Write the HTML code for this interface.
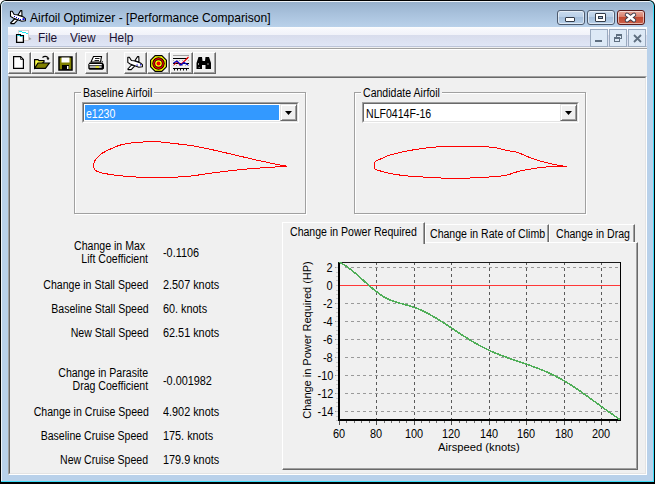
<!DOCTYPE html>
<html><head><meta charset="utf-8"><title>Airfoil Optimizer</title>
<style>
*{margin:0;padding:0;box-sizing:border-box}
html,body{width:655px;height:484px;overflow:hidden;background:#fff;font-family:"Liberation Sans",sans-serif}
.a{position:absolute}
.t{position:absolute;white-space:nowrap;font-size:12px;color:#000;line-height:13px;transform:scaleX(.88);transform-origin:0 0}
.r{text-align:right;transform-origin:100% 0}
.c{transform:scaleX(.93);transform-origin:0 0}
.cr{text-align:right;transform:scaleX(.91);transform-origin:100% 0}
.cc{text-align:center;transform:scaleX(.91);transform-origin:50% 0}
.btn{position:absolute;width:23px;height:22px;background:#f0f0f0;border-left:1px solid #fff;border-top:1px solid #fff;border-right:1px solid #696969;border-bottom:1px solid #696969;box-shadow:inset -1px -1px 0 #a0a0a0}
.btn svg{position:absolute;left:2px;top:2px}
</style></head><body>

<div class="a" style="left:0;top:0;width:655px;height:484px;background:#000;border-radius:6px 6px 0 0"></div>
<div class="a" style="left:1px;top:1px;width:653px;height:481px;border-radius:5px 5px 0 0;background:#3ddcf8"></div>
<div class="a" style="left:1px;top:1px;width:652px;height:480px;border-radius:5px 5px 0 0;background:#eef3f8"></div>
<div class="a" style="left:2px;top:2px;width:651px;height:479px;border-radius:4px 4px 0 0;background:linear-gradient(#98b1cc 0px,#a6bfda 10px,#b9d1ea 25px,#b9d1ea 100%)"></div>
<svg class="a" style="left:8px;top:8px" width="20" height="18" viewBox="0 0 20 18">
<path d="M10 7 L12.6 2.6 L13.8 2.6 L14 8.5 Z" fill="#fff" stroke="#000" stroke-width="1.1" stroke-linejoin="round"/>
<path d="M2.6 15 L6.5 11 L9.8 11.8 L6.2 15.6 L3 15.6 Z" fill="#fff" stroke="#000" stroke-width="1.1" stroke-linejoin="round"/>
<path d="M2.5 3.2 L4.2 3.2 L6.2 6.5 L9 6.8 L15.5 9 L17.4 10.6 L17.4 12.8 L13.8 13.2 L5.2 10 L2.5 8.4 Z" fill="#fff" stroke="#000" stroke-width="1.1" stroke-linejoin="round"/>
<rect x="6" y="8" width="1" height="1" fill="#0000d0"/><rect x="8" y="9" width="1" height="1" fill="#0000d0"/><rect x="10" y="10" width="1" height="1" fill="#0000d0"/><rect x="12" y="11" width="1" height="1" fill="#0000d0"/>
<rect x="14.5" y="10.2" width="2" height="1.8" fill="#0000e0"/>
</svg>
<div class="t" style="left:30px;top:12px;font-size:12.1px;line-height:13px;color:#000;transform:none">Airfoil Optimizer - [Performance Comparison]</div>
<div class="a" style="left:557px;top:10px;width:28px;height:15px;border:1px solid #4d5a6e;border-radius:3px;background:linear-gradient(#c8daee 0%,#bad0e8 45%,#a5bfdc 50%,#b7cfe8 100%);box-shadow:inset 0 0 0 1px rgba(255,255,255,.55)"></div>
<div class="a" style="left:587px;top:10px;width:28px;height:15px;border:1px solid #4d5a6e;border-radius:3px;background:linear-gradient(#c8daee 0%,#bad0e8 45%,#a5bfdc 50%,#b7cfe8 100%);box-shadow:inset 0 0 0 1px rgba(255,255,255,.55)"></div>
<div class="a" style="left:617px;top:10px;width:28px;height:15px;border:1px solid #5a1a1a;border-radius:3px;background:linear-gradient(#e8a99c 0%,#d7806d 45%,#c24a32 50%,#cc5f48 100%);box-shadow:inset 0 0 0 1px rgba(255,255,255,.55)"></div>
<div class="a" style="left:565px;top:17px;width:10px;height:5px;background:#fff;border:1px solid #333c4a;border-radius:1px"></div>
<div class="a" style="left:595px;top:13px;width:11px;height:9px;background:#fff;border:1px solid #333c4a;border-radius:1px"></div>
<div class="a" style="left:598px;top:16px;width:5px;height:3px;background:#9db6d2;border:1px solid #333c4a"></div>
<svg class="a" style="left:623px;top:11px" width="16" height="13" viewBox="0 0 16 13">
<path d="M4 3.8 L11 9.2 M11 3.8 L4 9.2" stroke="#3a3a4a" stroke-width="4.4" stroke-linecap="round"/>
<path d="M4 3.8 L11 9.2 M11 3.8 L4 9.2" stroke="#fff" stroke-width="2.6" stroke-linecap="round"/>
</svg>
<div class="a" style="left:8px;top:27px;width:639px;height:448px;background:#f0f0f0"></div>
<div class="a" style="left:8px;top:27px;width:639px;height:20px;background:linear-gradient(#fdfdfe 0px,#f7f8fc 2px,#f1f2f9 8px,#d8dcec 8px,#dfe5f5 18px,#e2e8f8 19px)"></div>
<div class="a" style="left:8px;top:46px;width:639px;height:1px;background:#bcc4d8"></div>
<svg class="a" style="left:12px;top:28px" width="22" height="18" viewBox="0 0 22 18">
<path d="M17 9 L19.5 11 L17 12 Z" fill="#9a9a9a"/>
<rect x="6.5" y="2.5" width="10" height="10" fill="#fff" stroke="#d8d0d0" stroke-width="1"/>
<path d="M7 3.5 L10 3.5 M10 4.5 L14 4.5 M14 5.5 L16 5.5" stroke="#20e8f0" stroke-width="1"/>
<path d="M4.6 6.6 L8.4 6.6 L8.4 7.6 L11.4 7.6 L11.4 14.4 L4.6 14.4 Z" fill="#fff" stroke="#000" stroke-width="1.3"/>
<path d="M5.2 7.5 L8 7.5 M8 8.5 L11 8.5" stroke="#20d8e8" stroke-width="1"/>
</svg>
<div class="t" style="left:37.5px;top:32px;color:#1a1030;transform:scaleX(.99)">File</div>
<div class="t" style="left:69.5px;top:32px;color:#1a1030;transform:scaleX(.99)">View</div>
<div class="t" style="left:108.5px;top:32px;color:#1a1030;transform:scaleX(.99)">Help</div>
<div class="a" style="left:590px;top:29px;width:18px;height:18px;border:1px solid #9aaabf;background:#dde9f6"></div>
<div class="a" style="left:609px;top:29px;width:18px;height:18px;border:1px solid #9aaabf;background:#dde9f6"></div>
<div class="a" style="left:628px;top:29px;width:18px;height:18px;border:1px solid #9aaabf;background:#dde9f6"></div>
<div class="a" style="left:595px;top:40px;width:7px;height:2px;background:#5f6f80"></div>
<div class="a" style="left:616px;top:34px;width:6px;height:5px;border:1px solid #5f6f80;border-top-width:2px"></div>
<div class="a" style="left:614px;top:37px;width:6px;height:5px;border:1px solid #5f6f80;border-top-width:2px;background:#dde9f6"></div>
<svg class="a" style="left:633px;top:34px" width="9" height="9" viewBox="0 0 9 9"><path d="M1 1 L8 8 M8 1 L1 8" stroke="#5f6f80" stroke-width="1.8"/></svg>
<div class="a" style="left:8px;top:48px;width:639px;height:1px;background:#a0a0a0"></div>
<div class="a" style="left:8px;top:49px;width:639px;height:1px;background:#fff"></div>
<div class="btn" style="left:8px;top:52px"><svg width="17" height="17" viewBox="0 0 17 17"><path d="M2.6 1.6 L9.6 1.6 L12.4 4.4 L12.4 13.4 L2.6 13.4 Z" fill="#fff" stroke="#000" stroke-width="1.2"/><path d="M9.6 1.6 L9.6 4.4 L12.4 4.4" fill="none" stroke="#000" stroke-width="0.8"/></svg></div>
<div class="btn" style="left:31px;top:52px"><svg width="17" height="17" viewBox="0 0 17 17"><path d="M0.6 4.6 L4 4.6 L5 5.6 L10 5.6 L10 7 L0.6 13.4 Z" fill="#ffff40" stroke="#000" stroke-width="1.2"/><path d="M0.6 13.4 L4 8 L15.4 8 L11.4 13.4 Z" fill="#808000" stroke="#000" stroke-width="1.2"/><path d="M8.5 2.5 Q11 0.2 14 2.5 L14 4" fill="none" stroke="#000" stroke-width="1.1"/><path d="M12.5 3.2 L14 5.2 L15.5 3.2 Z" fill="#000"/></svg></div>
<div class="btn" style="left:54px;top:52px"><svg width="17" height="17" viewBox="0 0 17 17"><rect x="2" y="2" width="13" height="13" fill="#808000" stroke="#000" stroke-width="1.5"/><rect x="4.5" y="2.5" width="8" height="5" fill="#fff"/><rect x="5" y="10" width="7" height="5" fill="#000"/><rect x="10" y="11" width="1.5" height="3" fill="#fff"/></svg></div>
<div class="btn" style="left:85px;top:52px"><svg width="17" height="17" viewBox="0 0 17 17"><path d="M5.5 1.5 L13.5 1.5 L12.5 7 L3 7 Z" fill="#fff" stroke="#000" stroke-width="1.1"/><path d="M7 3.5 L11.5 3.5 M6.5 5.5 L11 5.5" stroke="#000" stroke-width="0.9"/><path d="M1.5 7.5 L14.5 7.5 L16 9.5 L16 13.5 L14.5 14.8 L1.5 14.8 L0.3 13.5 L0.3 9.5 Z" fill="#000"/><rect x="1.3" y="9" width="12.5" height="1.3" fill="#fff"/><rect x="1.6" y="11.3" width="12" height="1.4" fill="#fff"/><rect x="7.5" y="11.3" width="3.5" height="1.4" fill="#e8e800"/><path d="M13.5 6 L15 7 M14 12 L15.5 11" stroke="#000" stroke-width="0.8"/></svg></div>
<div class="btn" style="left:124px;top:52px"><svg width="17" height="17" viewBox="0 0 17 17"><path d="M8 5.5 L10.6 1.6 L11.8 1.6 L12 7.5 Z" fill="#fff" stroke="#000" stroke-width="1.1" stroke-linejoin="round"/><path d="M0.8 14 L4.5 10 L7.8 10.8 L4.2 14.6 L1.2 14.6 Z" fill="#fff" stroke="#000" stroke-width="1.1" stroke-linejoin="round"/><path d="M0.8 2.2 L2.4 2.2 L4.4 5.5 L7 5.8 L13.5 8 L15.4 9.6 L15.4 11.8 L11.8 12.2 L3.2 9 L0.8 7.4 Z" fill="#fff" stroke="#000" stroke-width="1.1" stroke-linejoin="round"/><rect x="9.5" y="9.5" width="1.2" height="1.2" fill="#0000e0"/><rect x="13" y="9.2" width="1.2" height="1.2" fill="#0000e0"/></svg></div>
<div class="btn" style="left:147px;top:52px"><svg width="17" height="17" viewBox="0 0 17 17"><path d="M5.2 0.6 L11.8 0.6 L16.4 5.2 L16.4 11.8 L11.8 16.4 L5.2 16.4 L0.6 11.8 L0.6 5.2 Z" fill="#ffff00" stroke="#000" stroke-width="1.2"/><circle cx="8.5" cy="8.5" r="6.2" fill="#000"/><circle cx="8.5" cy="8.5" r="5.4" fill="#f00000"/><circle cx="8.5" cy="8.5" r="4" fill="#000"/><circle cx="8.5" cy="8.5" r="3.3" fill="#ffff00"/><circle cx="8.5" cy="8.5" r="2" fill="#f00000"/></svg></div>
<div class="btn" style="left:170px;top:52px"><svg width="17" height="17" viewBox="0 0 17 17"><path d="M0 0.5 L16 0.5" stroke="#a0a0a0"/><path d="M0 3.5 L15 3.5 M0 8.5 L16 8.5 M0 13.5 L16 13.5" stroke="#000"/><path d="M0 5.5 L16 5.5 M0 10.5 L16 10.5" stroke="#b0b0b0" stroke-dasharray="1 2"/><path d="M1 10 L4 6.5 L7 10 L10 7.5 L15.5 2" fill="none" stroke="#f00000" stroke-width="1.1"/><path d="M0.5 8 L4 6 L8 10 L11 7.5 L15 10" fill="none" stroke="#0000c0" stroke-width="1.3"/><path d="M1.5 14 L1.5 15.5 M4.5 14 L4.5 15.5 M7.5 14 L7.5 15.5 M10.5 14 L10.5 15.5 M13.5 14 L13.5 15.5" stroke="#000"/></svg></div>
<div class="btn" style="left:193px;top:52px"><svg width="17" height="17" viewBox="0 0 17 17"><path d="M2.5 2 L6 2 L6.5 6 L9 6 L9.5 2 L13 2 L15 8 L15 14 L9.5 14 L9.5 10 L6 10 L6 14 L0.5 14 L0.5 8 Z" fill="#000"/><path d="M2.5 8 L2.5 10 M3.2 12 L3.2 13 M12 8 L12 10" stroke="#909090" stroke-width="1"/></svg></div>
<div class="a" style="left:8px;top:76px;width:639px;height:399px;border-top:1px solid #a0a0a0;border-left:1px solid #a0a0a0;border-right:1px solid #fff;border-bottom:1px solid #fff"></div>
<div class="a" style="left:9px;top:77px;width:637px;height:397px;border-top:1px solid #696969;border-left:1px solid #696969;border-right:1px solid #e3e3e3;border-bottom:1px solid #e3e3e3;background:#f0f0f0"></div>
<div class="a" style="left:74px;top:92px;width:232px;height:122px;border:1px solid #a0a0a0;box-shadow:1px 1px 0 #fff, inset 1px 1px 0 #fff"></div>
<div class="a" style="left:81px;top:88px;width:73px;height:9px;background:#f0f0f0"></div>
<div class="t" style="left:83px;top:87px">Baseline Airfoil</div>
<div class="a" style="left:82px;top:102px;width:217px;height:21px;border-top:1px solid #a0a0a0;border-left:1px solid #a0a0a0;border-right:1px solid #fff;border-bottom:1px solid #fff"></div>
<div class="a" style="left:83px;top:103px;width:215px;height:19px;border-top:1px solid #696969;border-left:1px solid #696969;border-right:1px solid #e3e3e3;border-bottom:1px solid #e3e3e3;background:#fff"></div>
<div class="a" style="left:85px;top:105px;width:194px;height:15px;background:#3399ff"></div>
<div class="t" style="left:86px;top:108px;color:#fff">e1230</div>
<div class="a" style="left:280px;top:104px;width:17px;height:17px;background:#f0f0f0;border-left:1px solid #e3e3e3;border-top:1px solid #e3e3e3;border-right:1px solid #696969;border-bottom:1px solid #696969;box-shadow:inset 1px 1px 0 #fff, inset -1px -1px 0 #a0a0a0"></div>
<svg class="a" style="left:285px;top:111px" width="8" height="5" viewBox="0 0 8 5"><path d="M0 0 L7 0 L3.5 4 Z" fill="#000"/></svg>
<div class="a" style="left:354px;top:92px;width:232px;height:122px;border:1px solid #a0a0a0;box-shadow:1px 1px 0 #fff, inset 1px 1px 0 #fff"></div>
<div class="a" style="left:361px;top:88px;width:81px;height:9px;background:#f0f0f0"></div>
<div class="t" style="left:363px;top:87px">Candidate Airfoil</div>
<div class="a" style="left:362px;top:102px;width:217px;height:21px;border-top:1px solid #a0a0a0;border-left:1px solid #a0a0a0;border-right:1px solid #fff;border-bottom:1px solid #fff"></div>
<div class="a" style="left:363px;top:103px;width:215px;height:19px;border-top:1px solid #696969;border-left:1px solid #696969;border-right:1px solid #e3e3e3;border-bottom:1px solid #e3e3e3;background:#fff"></div>
<div class="t" style="left:366px;top:108px;color:#000">NLF0414F-16</div>
<div class="a" style="left:560px;top:104px;width:17px;height:17px;background:#f0f0f0;border-left:1px solid #e3e3e3;border-top:1px solid #e3e3e3;border-right:1px solid #696969;border-bottom:1px solid #696969;box-shadow:inset 1px 1px 0 #fff, inset -1px -1px 0 #a0a0a0"></div>
<svg class="a" style="left:565px;top:111px" width="8" height="5" viewBox="0 0 8 5"><path d="M0 0 L7 0 L3.5 4 Z" fill="#000"/></svg>
<svg class="a" style="left:0;top:0" width="655" height="484">
<polyline points="287.40,166.40 286.42,166.45 285.15,166.50 283.61,166.57 281.78,166.66 279.68,166.76 277.30,166.90 274.57,167.06 271.47,167.24 268.09,167.45 264.52,167.68 260.86,167.93 257.20,168.20 253.48,168.49 249.62,168.81 245.66,169.14 241.66,169.50 237.66,169.89 233.70,170.30 229.75,170.75 225.74,171.24 221.74,171.76 217.79,172.28 213.93,172.80 210.20,173.30 206.63,173.80 203.19,174.31 199.84,174.81 196.55,175.29 193.28,175.73 190.00,176.10 186.81,176.41 183.75,176.66 180.71,176.88 177.59,177.05 174.25,177.19 170.60,177.30 166.49,177.38 161.97,177.43 157.25,177.45 152.52,177.43 147.97,177.38 143.80,177.30 140.03,177.18 136.51,177.04 133.18,176.86 129.96,176.64 126.79,176.39 123.60,176.10 120.29,175.76 116.90,175.35 113.56,174.91 110.40,174.46 107.53,174.01 105.10,173.60 103.15,173.22 101.59,172.84 100.33,172.48 99.29,172.12 98.37,171.76 97.50,171.40 96.71,171.05 96.07,170.73 95.57,170.41 95.16,170.07 94.81,169.67 94.50,169.20 94.23,168.65 94.03,168.03 93.89,167.36 93.81,166.66 93.78,165.93 93.80,165.20 93.86,164.44 93.97,163.63 94.14,162.79 94.36,161.96 94.64,161.16 95.00,160.40 95.45,159.69 96.00,159.00 96.62,158.34 97.26,157.70 97.90,157.09 98.50,156.50 98.98,155.97 99.36,155.51 99.74,155.08 100.20,154.62 100.86,154.11 101.80,153.50 103.07,152.76 104.60,151.92 106.33,151.03 108.16,150.11 110.05,149.22 111.90,148.40 113.68,147.62 115.43,146.86 117.23,146.12 119.14,145.41 121.24,144.77 123.60,144.20 126.29,143.70 129.26,143.25 132.42,142.87 135.68,142.54 138.94,142.26 142.10,142.05 145.22,141.90 148.39,141.81 151.56,141.78 154.69,141.81 157.71,141.88 160.60,142.00 163.32,142.18 165.91,142.44 168.41,142.74 170.85,143.07 173.27,143.40 175.70,143.70 178.06,143.96 180.31,144.19 182.53,144.41 184.83,144.67 187.28,144.99 190.00,145.40 193.01,145.91 196.24,146.50 199.63,147.14 203.13,147.84 206.67,148.56 210.20,149.30 213.70,150.06 217.22,150.85 220.79,151.68 224.42,152.53 228.15,153.40 232.00,154.30 236.06,155.25 240.34,156.26 244.71,157.30 249.05,158.33 253.26,159.30 257.20,160.20 260.96,161.02 264.65,161.81 268.19,162.55 271.53,163.23 274.59,163.85 277.30,164.40 279.68,164.87 281.78,165.27 283.61,165.61 285.15,165.89 286.42,166.12 287.40,166.30" fill="none" stroke="#ff0000" stroke-width="1" shape-rendering="crispEdges"/>
<polyline points="566.50,166.70 565.16,166.71 563.31,166.71 561.12,166.72 558.76,166.73 556.40,166.76 554.20,166.80 552.16,166.84 550.13,166.87 548.09,166.92 546.04,166.99 543.95,167.11 541.80,167.30 539.53,167.57 537.14,167.92 534.72,168.31 532.33,168.73 530.07,169.13 528.00,169.50 526.17,169.82 524.52,170.11 522.99,170.39 521.52,170.69 520.05,171.02 518.50,171.40 516.86,171.87 515.17,172.41 513.48,172.98 511.83,173.55 510.25,174.07 508.80,174.50 507.55,174.84 506.47,175.11 505.48,175.33 504.47,175.53 503.34,175.71 502.00,175.90 500.41,176.09 498.64,176.28 496.76,176.45 494.82,176.61 492.88,176.76 491.00,176.90 489.21,177.02 487.48,177.13 485.75,177.22 483.96,177.31 482.06,177.40 480.00,177.50 477.78,177.62 475.45,177.75 473.01,177.89 470.45,178.01 467.78,178.12 465.00,178.20 461.99,178.25 458.74,178.28 455.37,178.29 452.02,178.29 448.82,178.25 445.90,178.20 443.39,178.12 441.22,178.00 439.19,177.87 437.14,177.72 434.87,177.56 432.20,177.40 429.04,177.25 425.52,177.10 421.79,176.95 417.99,176.77 414.28,176.56 410.80,176.30 407.52,175.99 404.30,175.63 401.18,175.24 398.15,174.82 395.25,174.37 392.50,173.90 389.82,173.37 387.20,172.77 384.69,172.14 382.39,171.53 380.37,170.97 378.70,170.50 377.45,170.16 376.58,169.91 375.98,169.72 375.57,169.54 375.24,169.31 374.90,169.00 374.59,168.60 374.39,168.14 374.27,167.65 374.21,167.12 374.20,166.57 374.20,166.00 374.21,165.38 374.26,164.69 374.34,163.97 374.47,163.28 374.66,162.64 374.90,162.10 375.22,161.67 375.62,161.32 376.07,161.03 376.55,160.78 377.03,160.54 377.50,160.30 377.88,160.10 378.19,159.95 378.49,159.83 378.89,159.67 379.47,159.44 380.30,159.10 381.38,158.62 382.64,158.03 384.07,157.36 385.67,156.66 387.45,155.96 389.40,155.30 391.56,154.66 393.93,154.01 396.47,153.36 399.15,152.71 401.90,152.09 404.70,151.50 407.54,150.93 410.46,150.37 413.47,149.84 416.56,149.33 419.74,148.84 423.00,148.40 426.40,147.98 429.93,147.59 433.56,147.22 437.21,146.90 440.84,146.62 444.40,146.40 447.94,146.24 451.53,146.14 455.10,146.09 458.58,146.08 461.90,146.08 465.00,146.10 467.84,146.13 470.46,146.19 472.93,146.27 475.30,146.37 477.64,146.48 480.00,146.60 482.36,146.70 484.66,146.79 486.92,146.89 489.17,147.03 491.43,147.22 493.70,147.50 496.06,147.90 498.50,148.40 500.94,148.97 503.31,149.54 505.52,150.07 507.50,150.50 509.22,150.82 510.75,151.06 512.12,151.26 513.37,151.45 514.55,151.65 515.70,151.90 516.69,152.16 517.48,152.41 518.19,152.67 518.96,152.98 519.92,153.38 521.20,153.90 522.90,154.60 524.93,155.46 527.14,156.40 529.42,157.36 531.62,158.25 533.60,159.00 535.36,159.60 537.01,160.12 538.58,160.57 540.10,160.98 541.63,161.38 543.20,161.80 544.75,162.22 546.25,162.63 547.74,163.03 549.30,163.41 550.96,163.80 552.80,164.20 555.00,164.63 557.57,165.09 560.25,165.55 562.80,165.98 564.96,166.34 566.50,166.60" fill="none" stroke="#ff0000" stroke-width="1" shape-rendering="crispEdges"/>
</svg>
<div class="t r" style="right:506.7px;top:240px">Change&nbsp;in&nbsp;Max&nbsp;<br>Lift Coefficient</div>
<div class="t" style="left:162.5px;top:247px;transform:scaleX(.905)">-0.1106</div>
<div class="t r" style="right:506.7px;top:279px">Change in Stall Speed</div>
<div class="t" style="left:162.5px;top:279px;transform:scaleX(.905)">2.507 knots</div>
<div class="t r" style="right:506.7px;top:303px">Baseline Stall Speed</div>
<div class="t" style="left:162.5px;top:303px;transform:scaleX(.905)">60. knots</div>
<div class="t r" style="right:506.7px;top:327px">New Stall Speed</div>
<div class="t" style="left:162.5px;top:327px;transform:scaleX(.905)">62.51 knots</div>
<div class="t r" style="right:506.7px;top:367px">Change in Parasite<br>Drag Coefficient</div>
<div class="t" style="left:162.5px;top:375px;transform:scaleX(.905)">-0.001982</div>
<div class="t r" style="right:506.7px;top:406px">Change in Cruise Speed</div>
<div class="t" style="left:162.5px;top:406px;transform:scaleX(.905)">4.902 knots</div>
<div class="t r" style="right:506.7px;top:430px">Baseline Cruise Speed</div>
<div class="t" style="left:162.5px;top:430px;transform:scaleX(.905)">175. knots</div>
<div class="t r" style="right:506.7px;top:454px">New Cruise Speed</div>
<div class="t" style="left:162.5px;top:454px;transform:scaleX(.905)">179.9 knots</div>
<div class="a" style="left:282px;top:242px;width:356px;height:228px;border-left:1px solid #fff;border-top:1px solid #fff;border-right:1px solid #696969;border-bottom:1px solid #696969;box-shadow:inset -1px -1px 0 #a0a0a0"></div>
<div class="a" style="left:425px;top:224px;width:124px;height:18px;border-left:1px solid #fff;border-top:1px solid #fff;border-right:1px solid #696969;box-shadow:inset -1px 0 0 #a0a0a0;background:#f0f0f0"></div>
<div class="a" style="left:549px;top:224px;width:86px;height:18px;border-left:1px solid #fff;border-top:1px solid #fff;border-right:1px solid #696969;box-shadow:inset -1px 0 0 #a0a0a0;background:#f0f0f0"></div>
<div class="a" style="left:282px;top:222px;width:143px;height:22px;border-left:1px solid #fff;border-top:1px solid #fff;border-right:1px solid #696969;box-shadow:inset -1px 0 0 #a0a0a0;background:#f0f0f0"></div>
<div class="t" style="left:290px;top:226px">Change in Power Required</div>
<div class="t" style="left:430px;top:228px">Change in Rate of Climb</div>
<div class="t" style="left:556px;top:228px">Change in Drag</div>
<svg class="a" style="left:0;top:0" width="655" height="484" shape-rendering="crispEdges"><line x1="376.5" y1="263" x2="376.5" y2="419" stroke="#5a5a5a" stroke-width="1" stroke-dasharray="3 3" stroke-dashoffset="1"/><line x1="414.5" y1="263" x2="414.5" y2="419" stroke="#5a5a5a" stroke-width="1" stroke-dasharray="3 3" stroke-dashoffset="1"/><line x1="451.5" y1="263" x2="451.5" y2="419" stroke="#5a5a5a" stroke-width="1" stroke-dasharray="3 3" stroke-dashoffset="1"/><line x1="489.5" y1="263" x2="489.5" y2="419" stroke="#5a5a5a" stroke-width="1" stroke-dasharray="3 3" stroke-dashoffset="1"/><line x1="526.5" y1="263" x2="526.5" y2="419" stroke="#5a5a5a" stroke-width="1" stroke-dasharray="3 3" stroke-dashoffset="1"/><line x1="564.5" y1="263" x2="564.5" y2="419" stroke="#5a5a5a" stroke-width="1" stroke-dasharray="3 3" stroke-dashoffset="1"/><line x1="601.5" y1="263" x2="601.5" y2="419" stroke="#5a5a5a" stroke-width="1" stroke-dasharray="3 3" stroke-dashoffset="1"/><line x1="335" y1="267.5" x2="338" y2="267.5" stroke="#9a9a9a" stroke-width="1"/><line x1="345" y1="267.5" x2="620" y2="267.5" stroke="#9a9a9a" stroke-width="1" stroke-dasharray="3 3"/><line x1="335" y1="303.5" x2="338" y2="303.5" stroke="#9a9a9a" stroke-width="1"/><line x1="345" y1="303.5" x2="620" y2="303.5" stroke="#9a9a9a" stroke-width="1" stroke-dasharray="3 3"/><line x1="335" y1="321.5" x2="338" y2="321.5" stroke="#9a9a9a" stroke-width="1"/><line x1="345" y1="321.5" x2="620" y2="321.5" stroke="#9a9a9a" stroke-width="1" stroke-dasharray="3 3"/><line x1="335" y1="339.5" x2="338" y2="339.5" stroke="#9a9a9a" stroke-width="1"/><line x1="345" y1="339.5" x2="620" y2="339.5" stroke="#9a9a9a" stroke-width="1" stroke-dasharray="3 3"/><line x1="335" y1="357.5" x2="338" y2="357.5" stroke="#9a9a9a" stroke-width="1"/><line x1="345" y1="357.5" x2="620" y2="357.5" stroke="#9a9a9a" stroke-width="1" stroke-dasharray="3 3"/><line x1="335" y1="375.5" x2="338" y2="375.5" stroke="#9a9a9a" stroke-width="1"/><line x1="345" y1="375.5" x2="620" y2="375.5" stroke="#9a9a9a" stroke-width="1" stroke-dasharray="3 3"/><line x1="335" y1="393.5" x2="338" y2="393.5" stroke="#9a9a9a" stroke-width="1"/><line x1="345" y1="393.5" x2="620" y2="393.5" stroke="#9a9a9a" stroke-width="1" stroke-dasharray="3 3"/><line x1="335" y1="411.5" x2="338" y2="411.5" stroke="#9a9a9a" stroke-width="1"/><line x1="345" y1="411.5" x2="620" y2="411.5" stroke="#9a9a9a" stroke-width="1" stroke-dasharray="3 3"/><line x1="340" y1="285.5" x2="620" y2="285.5" stroke="#ff3838" stroke-width="1"/><line x1="339.5" y1="421" x2="339.5" y2="425" stroke="#505050" stroke-width="1"/><line x1="346.5" y1="421" x2="346.5" y2="423" stroke="#707070" stroke-width="1"/><line x1="354.5" y1="421" x2="354.5" y2="423" stroke="#707070" stroke-width="1"/><line x1="361.5" y1="421" x2="361.5" y2="423" stroke="#707070" stroke-width="1"/><line x1="369.5" y1="421" x2="369.5" y2="423" stroke="#707070" stroke-width="1"/><line x1="376.5" y1="421" x2="376.5" y2="425" stroke="#505050" stroke-width="1"/><line x1="384.5" y1="421" x2="384.5" y2="423" stroke="#707070" stroke-width="1"/><line x1="391.5" y1="421" x2="391.5" y2="423" stroke="#707070" stroke-width="1"/><line x1="399.5" y1="421" x2="399.5" y2="423" stroke="#707070" stroke-width="1"/><line x1="406.5" y1="421" x2="406.5" y2="423" stroke="#707070" stroke-width="1"/><line x1="414.5" y1="421" x2="414.5" y2="425" stroke="#505050" stroke-width="1"/><line x1="421.5" y1="421" x2="421.5" y2="423" stroke="#707070" stroke-width="1"/><line x1="429.5" y1="421" x2="429.5" y2="423" stroke="#707070" stroke-width="1"/><line x1="436.5" y1="421" x2="436.5" y2="423" stroke="#707070" stroke-width="1"/><line x1="444.5" y1="421" x2="444.5" y2="423" stroke="#707070" stroke-width="1"/><line x1="451.5" y1="421" x2="451.5" y2="425" stroke="#505050" stroke-width="1"/><line x1="459.5" y1="421" x2="459.5" y2="423" stroke="#707070" stroke-width="1"/><line x1="466.5" y1="421" x2="466.5" y2="423" stroke="#707070" stroke-width="1"/><line x1="474.5" y1="421" x2="474.5" y2="423" stroke="#707070" stroke-width="1"/><line x1="481.5" y1="421" x2="481.5" y2="423" stroke="#707070" stroke-width="1"/><line x1="489.5" y1="421" x2="489.5" y2="425" stroke="#505050" stroke-width="1"/><line x1="496.5" y1="421" x2="496.5" y2="423" stroke="#707070" stroke-width="1"/><line x1="504.5" y1="421" x2="504.5" y2="423" stroke="#707070" stroke-width="1"/><line x1="511.5" y1="421" x2="511.5" y2="423" stroke="#707070" stroke-width="1"/><line x1="519.5" y1="421" x2="519.5" y2="423" stroke="#707070" stroke-width="1"/><line x1="526.5" y1="421" x2="526.5" y2="425" stroke="#505050" stroke-width="1"/><line x1="534.5" y1="421" x2="534.5" y2="423" stroke="#707070" stroke-width="1"/><line x1="541.5" y1="421" x2="541.5" y2="423" stroke="#707070" stroke-width="1"/><line x1="549.5" y1="421" x2="549.5" y2="423" stroke="#707070" stroke-width="1"/><line x1="556.5" y1="421" x2="556.5" y2="423" stroke="#707070" stroke-width="1"/><line x1="564.5" y1="421" x2="564.5" y2="425" stroke="#505050" stroke-width="1"/><line x1="571.5" y1="421" x2="571.5" y2="423" stroke="#707070" stroke-width="1"/><line x1="579.5" y1="421" x2="579.5" y2="423" stroke="#707070" stroke-width="1"/><line x1="586.5" y1="421" x2="586.5" y2="423" stroke="#707070" stroke-width="1"/><line x1="594.5" y1="421" x2="594.5" y2="423" stroke="#707070" stroke-width="1"/><line x1="601.5" y1="421" x2="601.5" y2="425" stroke="#505050" stroke-width="1"/><line x1="609.5" y1="421" x2="609.5" y2="423" stroke="#707070" stroke-width="1"/><line x1="616.5" y1="421" x2="616.5" y2="423" stroke="#707070" stroke-width="1"/><line x1="336" y1="267.5" x2="338" y2="267.5" stroke="#c8c8c8" stroke-width="1"/><line x1="336" y1="272.5" x2="338" y2="272.5" stroke="#c8c8c8" stroke-width="1"/><line x1="336" y1="276.5" x2="338" y2="276.5" stroke="#c8c8c8" stroke-width="1"/><line x1="336" y1="280.5" x2="338" y2="280.5" stroke="#c8c8c8" stroke-width="1"/><line x1="336" y1="285.5" x2="338" y2="285.5" stroke="#c8c8c8" stroke-width="1"/><line x1="336" y1="290.5" x2="338" y2="290.5" stroke="#c8c8c8" stroke-width="1"/><line x1="336" y1="294.5" x2="338" y2="294.5" stroke="#c8c8c8" stroke-width="1"/><line x1="336" y1="298.5" x2="338" y2="298.5" stroke="#c8c8c8" stroke-width="1"/><line x1="336" y1="303.5" x2="338" y2="303.5" stroke="#c8c8c8" stroke-width="1"/><line x1="336" y1="308.5" x2="338" y2="308.5" stroke="#c8c8c8" stroke-width="1"/><line x1="336" y1="312.5" x2="338" y2="312.5" stroke="#c8c8c8" stroke-width="1"/><line x1="336" y1="316.5" x2="338" y2="316.5" stroke="#c8c8c8" stroke-width="1"/><line x1="336" y1="321.5" x2="338" y2="321.5" stroke="#c8c8c8" stroke-width="1"/><line x1="336" y1="326.5" x2="338" y2="326.5" stroke="#c8c8c8" stroke-width="1"/><line x1="336" y1="330.5" x2="338" y2="330.5" stroke="#c8c8c8" stroke-width="1"/><line x1="336" y1="334.5" x2="338" y2="334.5" stroke="#c8c8c8" stroke-width="1"/><line x1="336" y1="339.5" x2="338" y2="339.5" stroke="#c8c8c8" stroke-width="1"/><line x1="336" y1="344.5" x2="338" y2="344.5" stroke="#c8c8c8" stroke-width="1"/><line x1="336" y1="348.5" x2="338" y2="348.5" stroke="#c8c8c8" stroke-width="1"/><line x1="336" y1="352.5" x2="338" y2="352.5" stroke="#c8c8c8" stroke-width="1"/><line x1="336" y1="357.5" x2="338" y2="357.5" stroke="#c8c8c8" stroke-width="1"/><line x1="336" y1="362.5" x2="338" y2="362.5" stroke="#c8c8c8" stroke-width="1"/><line x1="336" y1="366.5" x2="338" y2="366.5" stroke="#c8c8c8" stroke-width="1"/><line x1="336" y1="370.5" x2="338" y2="370.5" stroke="#c8c8c8" stroke-width="1"/><line x1="336" y1="375.5" x2="338" y2="375.5" stroke="#c8c8c8" stroke-width="1"/><line x1="336" y1="380.5" x2="338" y2="380.5" stroke="#c8c8c8" stroke-width="1"/><line x1="336" y1="384.5" x2="338" y2="384.5" stroke="#c8c8c8" stroke-width="1"/><line x1="336" y1="388.5" x2="338" y2="388.5" stroke="#c8c8c8" stroke-width="1"/><line x1="336" y1="393.5" x2="338" y2="393.5" stroke="#c8c8c8" stroke-width="1"/><line x1="336" y1="398.5" x2="338" y2="398.5" stroke="#c8c8c8" stroke-width="1"/><line x1="336" y1="402.5" x2="338" y2="402.5" stroke="#c8c8c8" stroke-width="1"/><line x1="336" y1="406.5" x2="338" y2="406.5" stroke="#c8c8c8" stroke-width="1"/><line x1="336" y1="411.5" x2="338" y2="411.5" stroke="#c8c8c8" stroke-width="1"/><line x1="336" y1="416.5" x2="338" y2="416.5" stroke="#c8c8c8" stroke-width="1"/><line x1="336" y1="420.5" x2="338" y2="420.5" stroke="#c8c8c8" stroke-width="1"/><rect x="338" y="262" width="2" height="159" fill="#000"/><rect x="338" y="419" width="283" height="2" fill="#000"/><rect x="338" y="262" width="283" height="1" fill="#1a1a1a"/><rect x="620" y="262" width="1" height="159" fill="#000"/></svg>
<svg class="a" style="left:0;top:0" width="655" height="484"><polyline points="339.5,262.33 341.0,263.08 342.5,263.89 344.0,264.78 345.5,265.74 347.0,266.76 348.5,267.83 350.0,268.95 351.5,270.12 353.0,271.33 354.5,272.58 356.0,273.86 357.5,275.16 359.0,276.48 360.5,277.82 362.0,279.17 363.5,280.52 365.0,281.88 366.5,283.22 368.0,284.56 369.5,285.89 371.0,287.19 372.5,288.47 374.0,289.71 375.5,290.93 377.0,292.10 378.5,293.22 380.0,294.30 381.5,295.31 383.0,296.27 384.5,297.16 386.0,297.99 387.5,298.74 389.0,299.44 390.5,300.08 392.0,300.67 393.5,301.22 395.0,301.73 396.5,302.21 398.0,302.66 399.5,303.09 401.0,303.51 402.5,303.91 404.0,304.31 405.5,304.71 407.0,305.12 408.5,305.54 410.0,305.97 411.5,306.43 413.0,306.92 414.5,307.44 416.0,308.00 417.5,308.59 419.0,309.21 420.5,309.87 422.0,310.55 423.5,311.26 425.0,312.00 426.5,312.77 428.0,313.56 429.5,314.37 431.0,315.20 432.5,316.06 434.0,316.93 435.5,317.82 437.0,318.73 438.5,319.65 440.0,320.58 441.5,321.53 443.0,322.48 444.5,323.45 446.0,324.42 447.5,325.40 449.0,326.38 450.5,327.37 452.0,328.36 453.5,329.35 455.0,330.34 456.5,331.32 458.0,332.31 459.5,333.29 461.0,334.27 462.5,335.24 464.0,336.20 465.5,337.16 467.0,338.11 468.5,339.04 470.0,339.97 471.5,340.88 473.0,341.78 474.5,342.66 476.0,343.53 477.5,344.39 479.0,345.22 480.5,346.03 482.0,346.83 483.5,347.60 485.0,348.36 486.5,349.09 488.0,349.80 489.5,350.50 491.0,351.18 492.5,351.84 494.0,352.48 495.5,353.11 497.0,353.73 498.5,354.33 500.0,354.92 501.5,355.50 503.0,356.06 504.5,356.62 506.0,357.17 507.5,357.71 509.0,358.25 510.5,358.78 512.0,359.30 513.5,359.82 515.0,360.33 516.5,360.84 518.0,361.35 519.5,361.86 521.0,362.37 522.5,362.88 524.0,363.39 525.5,363.91 527.0,364.43 528.5,364.95 530.0,365.48 531.5,366.01 533.0,366.55 534.5,367.10 536.0,367.66 537.5,368.23 539.0,368.80 540.5,369.39 542.0,370.00 543.5,370.61 545.0,371.24 546.5,371.88 548.0,372.54 549.5,373.22 551.0,373.91 552.5,374.63 554.0,375.36 555.5,376.11 557.0,376.88 558.5,377.68 560.0,378.50 561.5,379.34 563.0,380.20 564.5,381.08 566.0,381.98 567.5,382.89 569.0,383.83 570.5,384.78 572.0,385.75 573.5,386.73 575.0,387.72 576.5,388.73 578.0,389.75 579.5,390.78 581.0,391.82 582.5,392.87 584.0,393.93 585.5,395.00 587.0,396.07 588.5,397.15 590.0,398.23 591.5,399.32 593.0,400.41 594.5,401.50 596.0,402.59 597.5,403.69 599.0,404.78 600.5,405.88 602.0,406.97 603.5,408.05 605.0,409.14 606.5,410.22 608.0,411.29 609.5,412.35 611.0,413.41 612.5,414.46 614.0,415.51 615.5,416.54 617.0,417.56 618.5,418.56 620.0,419.56" fill="none" stroke="#50ae58" stroke-width="1.6" stroke-linejoin="round" shape-rendering="crispEdges"/></svg>
<div class="t cr" style="right:322px;top:262px">2</div>
<div class="t cr" style="right:322px;top:280px">0</div>
<div class="t cr" style="right:322px;top:298px">-2</div>
<div class="t cr" style="right:322px;top:316px">-4</div>
<div class="t cr" style="right:322px;top:334px">-6</div>
<div class="t cr" style="right:322px;top:352px">-8</div>
<div class="t cr" style="right:322px;top:370px">-10</div>
<div class="t cr" style="right:322px;top:388px">-12</div>
<div class="t cr" style="right:322px;top:406px">-14</div>
<div class="t cc" style="left:319.0px;width:40px;top:428px">60</div>
<div class="t cc" style="left:356.4666666666667px;width:40px;top:428px">80</div>
<div class="t cc" style="left:393.93333333333334px;width:40px;top:428px">100</div>
<div class="t cc" style="left:431.4px;width:40px;top:428px">120</div>
<div class="t cc" style="left:468.8666666666667px;width:40px;top:428px">140</div>
<div class="t cc" style="left:506.33333333333337px;width:40px;top:428px">160</div>
<div class="t cc" style="left:543.8px;width:40px;top:428px">180</div>
<div class="t cc" style="left:581.2666666666667px;width:40px;top:428px">200</div>
<div class="t c" style="left:438px;top:441px;font-size:11.5px;transform:scaleX(.975)">Airspeed (knots)</div>
<div class="t" style="left:307.2px;top:340.2px;font-size:11.5px;transform:translate(-50%,-50%) rotate(-90deg) scaleX(.955);transform-origin:50% 50%">Change in Power Required (HP)</div>
</body></html>
